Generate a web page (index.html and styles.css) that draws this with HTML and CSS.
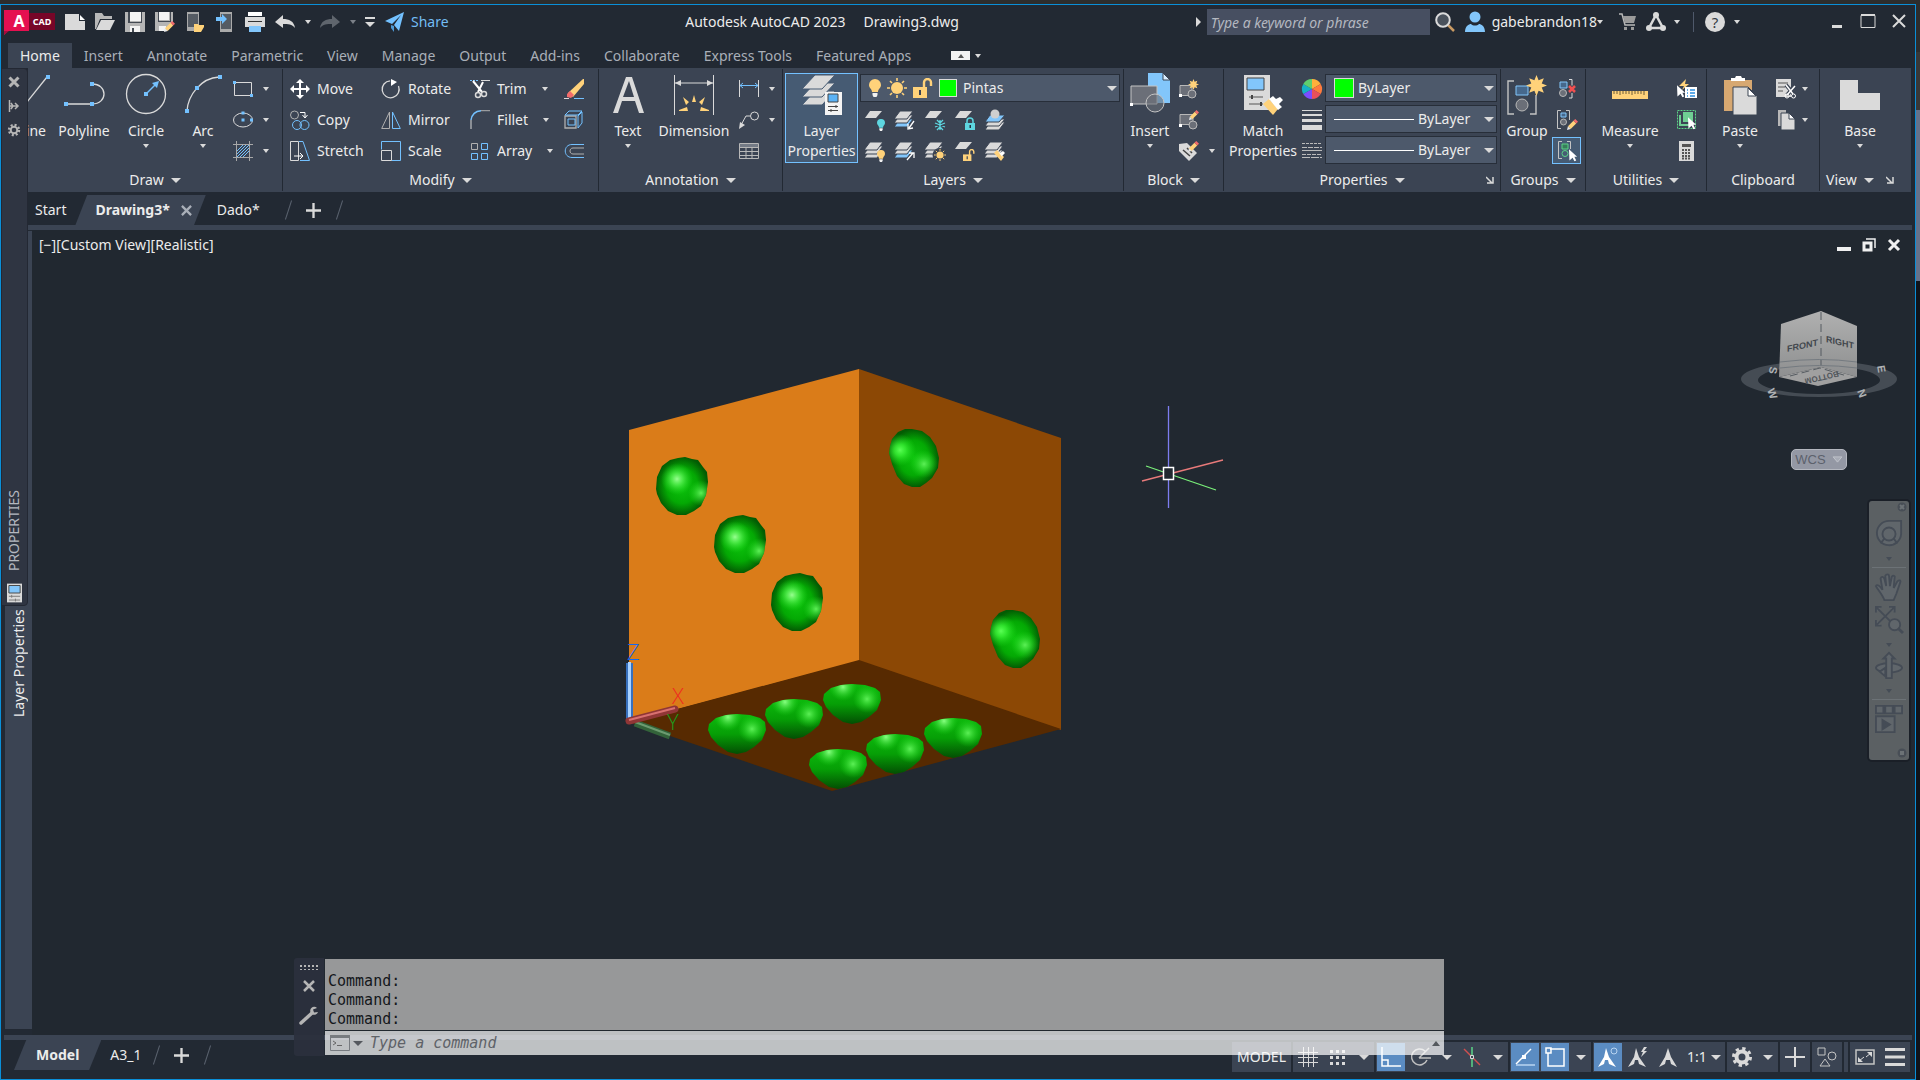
FILE: index.html
```html
<!DOCTYPE html>
<html lang="en">
<head>
    <meta charset="UTF-8">
    <meta name="viewport" content="width=device-width, initial-scale=1.0">
    <title>Autodesk AutoCAD 2023 - Drawing3.dwg</title>
    <link rel="stylesheet" href="styles.css">
</head>
<body>
    <!-- Shared icon parts -->
    <svg class="defs" width="0" height="0" aria-hidden="true">
        <defs>
            <symbol id="burst" viewBox="-10 -10 20 20">
                <polygon fill="#ffd27a" points="0,-10 2,-5 7,-7 5,-2 10,0 5,2 7,7 2,5 0,10 -2,5 -7,7 -5,2 -10,0 -5,-2 -7,-7 -2,-5"/>
            </symbol>
            <symbol id="sun" viewBox="-10 -10 20 20">
                <circle r="6" fill="#ffd27a"/>
                <path d="M0-10v3M0 7v3M-10 0h3M7 0h3M-7-7l2 2M5 5l2 2M-7 7l2-2M5-5l2-2" stroke="#ffd27a" stroke-width="1.6"/>
            </symbol>
            <symbol id="pencil" viewBox="0 0 12 12">
                <polygon fill="#ffd27a" points="1,8 7,2 10,5 4,11"/>
                <polygon fill="#f26b6b" points="7,2 9,0 12,3 10,5"/>
                <polygon fill="#e8e8e8" points="1,8 4,11 0,12"/>
            </symbol>
            <symbol id="cursor" viewBox="0 0 10 14">
                <path d="M0 0l9 8.500H6l2 4-2 1-2-4-3.500 3z" fill="#fff"/>
            </symbol>
            <symbol id="sheet" viewBox="0 0 20 20">
                <polygon fill="#dadada" points="5,1 17,1 11,8 0,8"/>
            </symbol>
            <symbol id="stack" viewBox="0 0 20 20">
                <g fill="#dadada" stroke="#3b4453" stroke-width="1">
                    <polygon points="5,9 18,9 12,17 -1,17"/>
                    <polygon points="5,5 18,5 12,13 -1,13"/>
                    <polygon points="5,1 18,1 12,9 -1,9"/>
                </g>
            </symbol>
            <symbol id="stack-blue" viewBox="0 0 20 20">
                <g fill="#dadada" stroke="#3b4453" stroke-width="1">
                    <polygon fill="#82c6fb" points="5,9 18,9 12,17 -1,17"/>
                    <polygon points="5,5 18,5 12,13 -1,13"/>
                    <polygon points="5,1 18,1 12,9 -1,9"/>
                </g>
            </symbol>
            <symbol id="bulb" viewBox="0 0 12 18">
                <path d="M6 0a6 6 0 0 1 6 6c0 3-3 4-3 7H3c0-3-3-4-3-7a6 6 0 0 1 6-6z" fill="currentColor"/>
                <path d="M3.500 14h5v2l-1 2h-3l-1-2z" fill="#f2f2f2"/>
            </symbol>
            <symbol id="open-lock" viewBox="0 0 20 20">
                <path d="M11 10V4.500a3.500 3.500 0 0 1 7 0V8" fill="none" stroke="#ffd27a" stroke-width="2.400"/>
                <path d="M0 9h14v11H0z" fill="#ffd27a"/><path d="M6 12h2v5H6z" fill="#3b4453"/>
            </symbol>
            <symbol id="launcher" viewBox="0 0 8 8">
                <path d="M0 1l6 6M7 1v6H1" fill="none" stroke="#dadada" stroke-width="1.500"/>
            </symbol>
        </defs>
    </svg>

    <div class="window">
        <!-- Title bar -->
        <header class="titlebar">
            <button class="logo" aria-label="Application menu">
                <svg width="52" height="28" viewBox="0 0 52 28">
                    <path d="M0 2h25v21H4l-4 4z" fill="#e51050"/><path d="M0 23h5l-5 4z" fill="#a60c3d"/><path d="M25 5h26v17H25z" fill="#770628"/>
                    <text x="15" y="19" class="logo-a">A</text><text x="38" y="17" class="logo-cad">CAD</text>
                </svg>
            </button>
            <div class="quick">
                <button aria-label="New"><svg viewBox="0 0 20 20"><path d="M0 2h14v7h6v9H0z" fill="#dadada"/><path d="M15 3l5 5h-5z" fill="#fff"/></svg></button>
                <button aria-label="Open"><svg viewBox="0 0 20 20"><path d="M0 1h7l2 3h8v3H5L1 17H0z" fill="#b8b8b8"/><path d="M6 8h14l-5 10H1z" fill="#dadada"/></svg></button>
                <button aria-label="Save"><svg viewBox="0 0 20 20"><path d="M0 0h20v20H0z" fill="#b5b5b5"/><path d="M5 0h11v9H5zM5 14h10v6H5z" fill="#f4f4f4"/><path d="M3 0h2v10h11V0h1v11H3zM7 16h2v4H7z" fill="#444a53"/></svg></button>
                <button aria-label="Save as"><svg viewBox="0 0 20 20"><path d="M0 0h18v12l-6 7H0z" fill="#b5b5b5"/><path d="M4 0h10v8H4zM4 14h7v5H4z" fill="#f4f4f4"/><path d="M3 0h1v9h11V0h1v10H3z" fill="#444a53"/><use href="#pencil" x="9" y="9" width="11" height="11"/></svg></button>
                <button aria-label="Open from device"><svg viewBox="0 0 20 20"><path d="M2 0h12v13l-5 6H2z" fill="#aaa"/><path d="M3 2h10v13H3z" fill="#555b63"/><path d="M9 12h4l1 1h5v2l-3 5H9z" fill="#ffd27a"/></svg></button>
                <button aria-label="Save to device"><svg viewBox="0 0 20 20"><path d="M5 0h12v20H5z" fill="#aaa"/><path d="M6 2h10v15H6z" fill="#555b63"/><path d="M1 5h6V2l5 5-5 5V9H1z" fill="#73c1ff"/></svg></button>
                <button aria-label="Plot"><svg viewBox="0 0 20 20"><path d="M3 0h14v4H3z" fill="#fff"/><path d="M0 5h20v10H0z" fill="#dadada"/><path d="M3 9h14v1H3z" fill="#333"/><path d="M4 14h12v6H4z" fill="#82c6fb"/></svg></button>
                <button aria-label="Undo"><svg viewBox="0 0 20 20"><path d="M0 10l8-7v4c6 0 11 2 12 9-3-4-7-4-12-4v4z" fill="#dadada"/></svg></button>
                <button class="narrow" aria-label="Undo list"><span class="caret"></span></button>
                <button aria-label="Redo"><svg viewBox="0 0 20 20"><path d="M20 10l-8-7v4C6 7 1 9 0 16c3-4 7-4 12-4v4z" fill="#5f656d"/></svg></button>
                <button class="narrow" aria-label="Redo list"><span class="caret dim"></span></button>
                <button class="custom" aria-label="Customize"><span class="bar"></span><span class="caret wide"></span></button>
                <button class="share"><svg viewBox="0 0 20 20"><path d="M0 9L19 0l-5 19-5-6 7-10-9 9z" fill="#73c1ff"/><path d="M6 13l3 1v6l-3-4z" fill="#4e9ad6"/></svg>Share</button>
            </div>
            <div class="caption"><span>Autodesk AutoCAD 2023</span><span>Drawing3.dwg</span></div>
            <div class="account">
                <span class="caret-right"></span>
                <input class="search" type="text" placeholder="Type a keyword or phrase" aria-label="Search">
                <button aria-label="Search"><svg viewBox="0 0 20 20"><path d="M13 13l6 6" stroke="#c99a63" stroke-width="2.500"/><circle cx="8" cy="8" r="6.800" fill="#4a525c" stroke="#dadada" stroke-width="2"/></svg></button>
                <button class="user"><svg viewBox="0 0 20 20"><circle cx="10" cy="5" r="5.500" fill="#82c6fb"/><path d="M0 20c0-6 4-8 6-8 2 2 6 2 8 0 2 0 6 2 6 8z" fill="#82c6fb"/></svg><span>gabebrandon18</span><span class="caret"></span></button>
                <button class="cart" aria-label="Store"><svg viewBox="0 0 20 20"><path d="M1 2h3l3 11h10" fill="none" stroke="#b8b8b8" stroke-width="1.500"/><path d="M5 4h13l-2 7H7zM6 15h3v3H6zM13 15h3v3h-3z" fill="#9a9a9a"/></svg></button>
                <button class="apps" aria-label="Autodesk apps"><svg viewBox="0 0 20 20"><path d="M10 3l7 13H3z" fill="none" stroke="#dadada" stroke-width="2.500"/><circle cx="10" cy="3" r="3" fill="#dadada"/><circle cx="3" cy="16" r="3" fill="#dadada"/><circle cx="17" cy="16" r="3" fill="#dadada"/></svg><span class="caret"></span></button>
                <button class="help" aria-label="Help"><span class="help-mark">?</span><span class="caret"></span></button>
            </div>
            <div class="window-buttons">
                <button aria-label="Minimize"><svg viewBox="0 0 16 16"><path d="M3 11h10v3H3z" fill="#dadada"/></svg></button>
                <button aria-label="Maximize"><svg viewBox="0 0 16 16"><path d="M1 1.500h14v12H1z" fill="none" stroke="#dadada"/><path d="M1 0h14v2H1z" fill="#dadada"/></svg></button>
                <button aria-label="Close"><svg viewBox="0 0 16 16"><path d="M2 1l12 12M14 1L2 13" stroke="#dadada" stroke-width="2"/></svg></button>
            </div>
        </header>

        <!-- Ribbon tabs -->
        <nav class="ribbon-tabs">
            <a href="#" class="active">Home</a>
            <a href="#">Insert</a>
            <a href="#">Annotate</a>
            <a href="#">Parametric</a>
            <a href="#">View</a>
            <a href="#">Manage</a>
            <a href="#">Output</a>
            <a href="#">Add-ins</a>
            <a href="#">Collaborate</a>
            <a href="#">Express Tools</a>
            <a href="#">Featured Apps</a>
            <button class="ribbon-toggle" aria-label="Minimize ribbon"><span class="toggle-box"></span><span class="caret"></span></button>
        </nav>

        <!-- Ribbon -->
        <div class="ribbon">
            <section class="panel">
                <div class="panel-body">
                    <button class="big line"><svg viewBox="0 0 40 40"><path d="M9 39L37 4" stroke="#dadada" stroke-width="1.300"/><path d="M36 2h4v4h-4z" fill="#73c1ff"/></svg><span>Line</span></button>
                    <button class="big polyline"><svg viewBox="0 0 40 40"><path d="M2 31h26c16 0 16-20 0-20" fill="none" stroke="#dadada" stroke-width="1.300"/><path d="M0 29h4v4H0zM26 29h4v4h-4zM26 9h4v4h-4z" fill="#73c1ff"/></svg><span>Polyline</span></button>
                    <button class="big polyline"><svg viewBox="0 0 40 40"><circle cx="20" cy="21" r="19.500" fill="none" stroke="#dadada" stroke-width="1.300"/><path d="M20 21l10-10" stroke="#73c1ff" stroke-width="1.500"/><path d="M18 19h4v4h-4zM33 8l-7 2 5 5z" fill="#73c1ff"/></svg><span>Circle</span><span class="caret"></span></button>
                    <button class="big arc"><svg viewBox="0 0 40 40"><path d="M4 38C5 22 18 5 36 4" fill="none" stroke="#dadada" stroke-width="1.300"/><path d="M2 36h4v4H2zM12 13h4v4h-4zM35 2h4v4h-4z" fill="#73c1ff"/></svg><span>Arc</span><span class="caret"></span></button>
                    <div class="small-col">
                        <button aria-label="Rectangle"><svg viewBox="0 0 20 20"><path d="M1.500 3.500h17v13h-17z" fill="none" stroke="#dadada"/><path d="M0 2h3v3H0zM17 15h3v3h-3z" fill="#73c1ff"/></svg><span class="caret"></span></button>
                        <button aria-label="Ellipse"><svg viewBox="0 0 20 20"><ellipse cx="10" cy="10" rx="9.500" ry="7" fill="none" stroke="#dadada"/><path d="M8.500 8.500h3v3h-3zM8.500 1.500h3v3h-3zM17 8.500h3v3h-3z" fill="#73c1ff"/></svg><span class="caret"></span></button>
                        <button aria-label="Hatch"><svg viewBox="0 0 20 20"><path d="M3.500 0v20M16.500 0v20M0 3.500h20M0 16.500h20" stroke="#a8a8a8"/><path d="M4 10l6-6M4 13l9-9M4 16l12-12M7 16l9-9M10 16l6-6" stroke="#73c1ff"/></svg><span class="caret"></span></button>
                    </div>
                </div>
                <h2>Draw <span class="caret wide"></span></h2>
            </section>

            <section class="panel">
                <div class="panel-body modify-grid">
                    <button><svg viewBox="0 0 20 20"><path d="M10 0l4 4h-3v5h5V6l4 4-4 4v-3h-5v5h3l-4 4-4-4h3v-5H4v3l-4-4 4-4v3h5V4H6z" fill="#fff"/></svg><span>Move</span></button>
                    <button><svg viewBox="0 0 20 20"><path d="M8 2a8.500 8.500 0 1 0 9 4" fill="none" stroke="#dadada" stroke-width="1.300" transform="rotate(8 10 10)"/><path d="M10 0l6 3-6 4z" fill="#fff"/></svg><span>Rotate</span></button>
                    <button><svg viewBox="0 0 20 20"><path d="M0 1.500h9" stroke="#73c1ff" stroke-dasharray="2 1"/><path d="M11 1.500h9" stroke="#dadada"/><path d="M3 2l9 11M13 3l-5 10" stroke="#fff" stroke-width="2"/><circle cx="8" cy="16" r="2.500" fill="none" stroke="#dadada" stroke-width="1.500"/><circle cx="14" cy="15" r="2.500" fill="none" stroke="#dadada" stroke-width="1.500"/></svg><span>Trim</span><span class="caret"></span></button>
                    <button aria-label="Erase"><svg viewBox="0 0 20 20"><path d="M19 0h1v5L9 18l-5-4z" fill="#ffd27a"/><path d="M6 12l4 4-3 3-4-1v-3z" fill="#f26b6b"/><path d="M0 19.500h5" stroke="#dadada"/><path d="M10 19.500h10" stroke="#73c1ff"/></svg></button>
                    <button><svg viewBox="0 0 20 20"><circle cx="4.500" cy="5" r="4" fill="none" stroke="#b0b0b0"/><circle cx="7" cy="15" r="4.500" fill="none" stroke="#73c1ff"/><circle cx="14.500" cy="15" r="4.500" fill="none" stroke="#73c1ff"/><path d="M10 2.500h5v5M12.500 5l2.500 3 2.500-3" fill="none" stroke="#fff"/></svg><span>Copy</span></button>
                    <button><svg viewBox="0 0 20 20"><path d="M8.500 2v16.500H.700z" fill="none" stroke="#b0b0b0"/><path d="M11.500 2v16.500h7.800z" fill="none" stroke="#73c1ff"/></svg><span>Mirror</span></button>
                    <button><svg viewBox="0 0 20 20"><path d="M1 19V10" stroke="#dadada"/><path d="M1 10C2 4 6 1 11 .700" fill="none" stroke="#73c1ff" stroke-width="1.500"/><path d="M11 .700h9" stroke="#b0b0b0"/></svg><span>Fillet</span><span class="caret"></span></button>
                    <button aria-label="Explode"><svg viewBox="0 0 20 20"><path d="M1 6h11v12H1z" fill="none" stroke="#b0b0b0" stroke-width="1.300"/><path d="M1 5l4-4h13l-4 4zM14 6l4-4v11l-4 5zM4 9h7v6H4z" fill="none" stroke="#73c1ff"/></svg></button>
                    <button><svg viewBox="0 0 20 20"><path d="M.500.500h8v19h-8z" fill="none" stroke="#dadada"/><path d="M9 .500h4l6.500 19H10" fill="none" stroke="#73c1ff"/><path d="M4 15h8M10 12l3 3-3 3" fill="none" stroke="#fff"/></svg><span>Stretch</span></button>
                    <button><svg viewBox="0 0 20 20"><path d="M.500 8.500V.500h19v19h-9" fill="none" stroke="#73c1ff"/><path d="M.500 9.500h10v10H.500z" fill="none" stroke="#dadada"/></svg><span>Scale</span></button>
                    <button><svg viewBox="0 0 20 20"><path d="M1.500 2.500h6v6h-6z" fill="none" stroke="#b0b0b0"/><path d="M11.500 2.500h6v6h-6zM1.500 12.500h6v6h-6zM11.500 12.500h6v6h-6z" fill="none" stroke="#73c1ff"/></svg><span>Array</span><span class="caret"></span></button>
                    <button aria-label="Offset"><svg viewBox="0 0 20 20"><path d="M20 3.500H8c-9 0-9 13 0 13h12" fill="none" stroke="#73c1ff"/><path d="M20 7H9c-4 0-4 6 0 6h11" fill="none" stroke="#b0b0b0"/></svg></button>
                </div>
                <h2>Modify <span class="caret wide"></span></h2>
            </section>

            <section class="panel">
                <div class="panel-body annotation">
                    <button class="big text-tool"><svg viewBox="0 0 40 40"><path d="M5 40L18 4h6l12 36h-5l-4-12H14l-4 12zM15 24h11L21 8z" fill="#dadada"/></svg><span>Text</span><span class="caret"></span></button>
                    <button class="big dimension"><svg viewBox="0 0 40 40"><path d="M.500 2v40M39.500 2v40M1 10h38" stroke="#dadada"/><path d="M1 10l6-3v6zM39 10l-6-3v6z" fill="#dadada"/><path d="M20 22l-2 7h4zM9 24l3 8 3-3zM31 24l-3 8-3-3zM5 37l8-3 1 4H5zM35 37l-8-3-1 4h9z" fill="#ffd27a"/></svg><span>Dimension</span></button>
                    <div class="small-col">
                        <button aria-label="Linear dimension"><svg viewBox="0 0 20 20"><path d="M.500 1v17M19.500 1v17" stroke="#dadada"/><path d="M1 6.500h18M4 4L1 6.500 4 9M16 4l3 2.500L16 9" fill="none" stroke="#73c1ff"/></svg><span class="caret"></span></button>
                        <button aria-label="Leader"><svg viewBox="0 0 20 20"><circle cx="15.500" cy="6" r="4" fill="none" stroke="#dadada"/><path d="M2 15l5-9h4" fill="none" stroke="#dadada"/><path d="M0 19l1-7 5 3z" fill="#dadada"/></svg><span class="caret"></span></button>
                        <button aria-label="Table"><svg viewBox="0 0 20 20"><path d="M.500 2.500h19v15H.500zM0 6.500h20M0 10.500h20M0 14.500h20M7 6v12M13 6v12" fill="none" stroke="#b8b8b8"/><path d="M1 3h18v3H1z" fill="#747b86"/></svg></button>
                    </div>
                </div>
                <h2>Annotation <span class="caret wide"></span></h2>
            </section>

            <section class="panel">
                <div class="panel-body layers">
                    <button class="big selected"><svg viewBox="0 0 40 40"><g fill="#dadada" stroke="#465b73"><polygon points="13,18 33,18 20,32 0,32"/><polygon points="13,10 33,10 20,24 0,24"/><polygon points="13,2 33,2 20,16 0,16"/></g><path d="M23 19h17v23H23z" fill="#f4f4f4"/><path d="M26 21h10v8H26z" fill="#5ab2f5" stroke="#444"/><path d="M26 33.500h10M26 37.500h10M34 32v3M29 36v3" stroke="#444"/></svg><span>Layer<br>Properties</span></button>
                    <div class="layer-tools">
                        <div class="combo">
                            <svg class="combo-bulb" viewBox="0 0 12 18"><use href="#bulb"/></svg>
                            <svg viewBox="0 0 20 20"><use href="#sun"/></svg>
                            <svg viewBox="0 0 20 20"><use href="#open-lock"/></svg>
                            <span class="swatch small"></span>
                            <select aria-label="Layer"><option>Pintas</option></select>
                            <span class="caret wide"></span>
                        </div>
                        <div class="layer-grid">
                            <button class="cyan" aria-label="Layer off"><svg viewBox="0 0 20 20"><use href="#sheet"/><use href="#bulb" x="12" y="9" width="8" height="12"/></svg></button>
                            <button aria-label="Isolate"><svg viewBox="0 0 20 20"><use href="#stack-blue"/><path d="M19 11l-5 7M13 14v5l5-1" fill="none" stroke="#fff" stroke-width="1.300"/></svg></button>
                            <button class="cyan" aria-label="Freeze"><svg viewBox="0 0 20 20"><use href="#sheet"/><path d="M15 10v10M10 13l10 4M10 17l10-4M12 10l3 3 3-3M12 20l3-3 3 3" fill="none" stroke="currentColor" stroke-width="1.300"/></svg></button>
                            <button class="cyan" aria-label="Lock"><svg viewBox="0 0 20 20"><use href="#sheet"/><path d="M12 13v-2a3 3 0 0 1 6 0v2" fill="none" stroke="currentColor" stroke-width="1.500"/><path d="M10 13h10v7H10z" fill="currentColor"/><path d="M14.500 15h1.500v3h-1.500z" fill="#234"/></svg></button>
                            <button aria-label="Make current"><svg viewBox="0 0 20 20"><g stroke="#3b4453"><polygon fill="#dadada" points="5,12 20,12 14,20 0,20"/><polygon fill="#dadada" points="5,9 20,9 14,16 0,16"/><polygon fill="#82c6fb" points="5,5 20,5 14,12 0,12"/></g><circle cx="10" cy="4" r="4.500" fill="#cfcfcf"/></svg></button>
                            <button class="yellow" aria-label="All layers on"><svg viewBox="0 0 20 20"><use href="#stack"/><use href="#bulb" x="12" y="9" width="8" height="12"/></svg></button>
                            <button aria-label="Unisolate"><svg viewBox="0 0 20 20"><use href="#stack-blue"/><path d="M12 19l6-7M14 12h5v5" fill="none" stroke="#fff" stroke-width="1.300"/></svg></button>
                            <button aria-label="Thaw"><svg viewBox="0 0 20 20"><use href="#stack"/><circle cx="14.500" cy="14" r="7" fill="#3b4453"/><use href="#sun" x="9" y="8" width="12" height="12"/></svg></button>
                            <button aria-label="Unlock"><svg viewBox="0 0 20 20"><use href="#sheet"/><use href="#open-lock" x="8" y="8" width="12" height="12"/></svg></button>
                            <button aria-label="Match layer"><svg viewBox="0 0 20 20"><use href="#stack"/><path d="M9 12l3-3 7 7-3 4z" fill="#ffd27a"/><path d="M12 9l3 3 3-2 2 2-3 3 1 2" fill="#fff"/></svg></button>
                        </div>
                    </div>
                </div>
                <h2>Layers <span class="caret wide"></span></h2>
            </section>

            <section class="panel">
                <div class="panel-body block">
                    <button class="big insert"><svg viewBox="0 0 40 40"><path d="M18 0h15l7 7v23H18z" fill="#82c6fb"/><path d="M33 0v7h7z" fill="#dbeeff" stroke="#3b4453"/><path d="M1 13h26v18H1z" fill="#6b6f78" stroke="#c4c4c4"/><circle cx="25" cy="30" r="9" fill="#6b6f7899" stroke="#c4c4c4"/><path d="M0 30h3v3H0z" fill="#fff"/></svg><span>Insert</span><span class="caret"></span></button>
                    <div class="small-col">
                        <button aria-label="Create block"><svg viewBox="0 0 20 20"><path d="M1 6.500h12v10H1z" fill="#6b6f78" stroke="#b8b8b8"/><circle cx="13" cy="15" r="4" fill="#6b6f78" stroke="#b8b8b8"/><use href="#burst" x="9" y="0" width="11" height="11"/><path d="M0 15h3v3H0z" fill="#fff"/></svg></button>
                        <button aria-label="Edit block"><svg viewBox="0 0 20 20"><path d="M1 4.500h13v10H1z" fill="#6b6f78" stroke="#b8b8b8"/><circle cx="14" cy="15" r="4" fill="#6b6f78" stroke="#b8b8b8"/><use href="#pencil" x="10" y="0" width="10" height="10"/><path d="M0 14h3v3H0z" fill="#fff"/></svg></button>
                        <button aria-label="Edit attributes"><svg viewBox="0 0 20 20"><path d="M0 3l8-1 10 10-8 8L0 10z" fill="#dadada"/><path d="M4 9l7 6M8 7l5 5" stroke="#444" stroke-width="1.500"/><use href="#pencil" x="9" y="0" width="11" height="11"/></svg><span class="caret"></span></button>
                    </div>
                </div>
                <h2>Block <span class="caret wide"></span></h2>
            </section>

            <section class="panel">
                <div class="panel-body properties">
                    <button class="big match"><svg viewBox="0 0 40 40"><path d="M1 2h26v35H1z" fill="#dadada"/><path d="M4 5h17v12H4z" fill="#82c6fb" stroke="#444"/><path d="M6 24h14M6 31h14" stroke="#555"/><path d="M8 22h2v4H8zM17 29h2v4h-2z" fill="#444"/><path d="M20 31l6-5 9 10-5 6z" fill="#ffd27a"/><path d="M26 26l4-3 3 3 4-2 3 3-4 4 3 3-4 3z" fill="#fff"/></svg><span>Match<br>Properties</span></button>
                    <div class="property-rows">
                        <div class="property-row">
                            <svg viewBox="-10 -10 20 20"><path d="M0 0V-10A10 10 0 0 1 8.700-5z" fill="#ffb03b"/><path d="M0 0L8.700-5A10 10 0 0 1 8.700 5z" fill="#ff7b3d"/><path d="M0 0L8.700 5A10 10 0 0 1 0 10z" fill="#e8505b"/><path d="M0 0V10A10 10 0 0 1-8.700 5z" fill="#7c4dff"/><path d="M0 0L-8.700 5A10 10 0 0 1-8.700-5z" fill="#17b1c6"/><path d="M0 0L-8.700-5A10 10 0 0 1 0-10z" fill="#5fce6e"/></svg>
                            <div class="combo"><span class="swatch"></span><select aria-label="Object color"><option>ByLayer</option></select><span class="caret wide"></span></div>
                        </div>
                        <div class="property-row">
                            <svg viewBox="0 0 20 20"><path d="M0 0h20v1H0zM0 4h20v2H0zM0 9h20v3H0zM0 15h20v5H0z" fill="#dadada"/></svg>
                            <div class="combo"><span class="line-sample"></span><select aria-label="Lineweight"><option>ByLayer</option></select><span class="caret wide"></span></div>
                        </div>
                        <div class="property-row">
                            <svg viewBox="0 0 20 20"><path d="M0 2.500h20" stroke="#bbb" stroke-dasharray="3 1"/><path d="M0 6.500h20" stroke="#bbb" stroke-dasharray="5 1"/><path d="M0 9.500h20" stroke="#bbb"/><path d="M0 13.500h20" stroke="#bbb" stroke-dasharray="4 1"/><path d="M0 16.500h20" stroke="#bbb" stroke-dasharray="8 1"/></svg>
                            <div class="combo"><span class="line-sample"></span><select aria-label="Linetype"><option>ByLayer</option></select><span class="caret wide"></span></div>
                        </div>
                    </div>
                </div>
                <h2>Properties <span class="caret wide"></span><svg class="launcher" viewBox="0 0 8 8"><use href="#launcher"/></svg></h2>
            </section>

            <section class="panel">
                <div class="panel-body groups">
                    <button class="big group"><svg viewBox="0 0 40 40"><path d="M7 8H1v33h6M23 41h6V22" fill="none" stroke="#c4c4c4" stroke-width="1.400"/><path d="M9 13h12v9H9z" fill="#46688c" stroke="#82c6fb"/><circle cx="15" cy="32" r="6" fill="#6b6f78" stroke="#b8b8b8"/><use href="#burst" x="19" y="2" width="21" height="21"/></svg><span>Group</span></button>
                    <div class="small-col">
                        <button aria-label="Ungroup"><svg viewBox="0 0 20 20"><path d="M3 3h7v6H3z" fill="#46688c" stroke="#82c6fb"/><circle cx="6" cy="14" r="3.500" fill="#6b6f78" stroke="#b8b8b8"/><path d="M12 .500h3v6M15 14v5h-3" fill="none" stroke="#dadada"/><path d="M12 7l6 6M18 7l-6 6" stroke="#f15050" stroke-width="2.500"/></svg></button>
                        <button aria-label="Edit group"><svg viewBox="0 0 20 20"><path d="M4 .500H.500v18H4M9 .500h3.500V10" fill="none" stroke="#c4c4c4"/><path d="M4 3h5v4H4z" fill="#46688c" stroke="#82c6fb"/><circle cx="6.500" cy="12" r="3" fill="#6b6f78" stroke="#b8b8b8"/><use href="#pencil" x="10" y="9" width="11" height="11"/></svg></button>
                        <button class="selected" aria-label="Group selection"><svg viewBox="0 0 20 20"><path d="M5 .500H1.500v17H5M10 .500h3.500V8" fill="none" stroke="#c4c4c4"/><path d="M5 3h6v5H5z" fill="#377d5a" stroke="#5bd487"/><circle cx="8" cy="12.500" r="3" fill="none" stroke="#5bd487"/><use href="#cursor" x="12" y="8" width="9" height="13"/></svg></button>
                    </div>
                </div>
                <h2>Groups <span class="caret wide"></span></h2>
            </section>

            <section class="panel">
                <div class="panel-body utilities">
                    <button class="big measure"><svg viewBox="0 0 40 40"><path d="M2 18h36v8H2z" fill="#ffd27a"/><path d="M4 18v3M7 18v3M10 18v4M13 18v3M16 18v3M19 18v3M22 18v4M25 18v3M28 18v3M31 18v3M34 18v4" stroke="#6d5c38"/></svg><span>Measure</span><span class="caret"></span></button>
                    <div class="small-col">
                        <button aria-label="Quick select"><svg viewBox="0 0 20 20"><path d="M9 0L2 7h5l-2 4 7-6H8z" fill="#ffd27a"/><path d="M8 8h12v11H8z" fill="#fff"/><path d="M10 11h1M13 11h5M10 14h1M13 14h5M10 17h1M13 17h5" stroke="#2b8fe0" stroke-width="1.500"/><use href="#cursor" x="0" y="6" width="9" height="13"/></svg></button>
                        <button aria-label="Select all"><svg viewBox="0 0 20 20"><path d="M.500.500h18v18H.500z" fill="none" stroke="#5bd487" stroke-dasharray="2 1"/><path d="M6 2h10v10H6z" fill="#6fce93"/><path d="M3 5v10h10" fill="none" stroke="#6fce93" stroke-width="2"/><use href="#cursor" x="11" y="7" width="9" height="13"/></svg></button>
                        <button aria-label="Calculator"><svg viewBox="0 0 20 20"><path d="M2 0h15v20H2z" fill="#dadada"/><path d="M5 3h9v3H5z" fill="#555"/><path d="M5 9h9M5 12h9M5 15h9M5 17.500h9" stroke="#555" stroke-width="2" stroke-dasharray="2 1"/></svg></button>
                    </div>
                </div>
                <h2>Utilities <span class="caret wide"></span></h2>
            </section>

            <section class="panel">
                <div class="panel-body clipboard">
                    <button class="big paste"><svg viewBox="0 0 40 40"><path d="M4 7h28v31H4z" fill="#d7a871"/><path d="M11 8V5h4l1-2h5l1 2h3v3z" fill="#fff"/><path d="M13 14h15l9 9v19H13z" fill="#dadada" stroke="#3b4453"/><path d="M28 15v8h8z" fill="#fff" stroke="#3b4453"/></svg><span>Paste</span><span class="caret"></span></button>
                    <div class="small-col">
                        <button aria-label="Cut"><svg viewBox="0 0 20 20"><path d="M0 0h15v18H0z" fill="#dadada"/><path d="M2 4h10M2 8h7M2 12h5" stroke="#555"/><path d="M10 6l8 9M19 7l-8 9" stroke="#3b4453" stroke-width="4"/><path d="M10 6l7 9M19 7l-8 9" stroke="#fff" stroke-width="1.500"/><circle cx="11" cy="17" r="2" fill="none" stroke="#fff"/><circle cx="17.500" cy="17" r="2" fill="none" stroke="#fff"/></svg><span class="caret"></span></button>
                        <button aria-label="Copy clip"><svg viewBox="0 0 20 20"><path d="M2 0h8v16H2z" fill="#b8b8b8"/><path d="M5 3h8l6 6v11H5z" fill="#dadada" stroke="#3b4453"/><path d="M13 3v6h6z" fill="#fff" stroke="#3b4453"/></svg><span class="caret"></span></button>
                    </div>
                </div>
                <h2>Clipboard</h2>
            </section>

            <section class="panel">
                <div class="panel-body view">
                    <button class="big"><svg viewBox="0 0 40 40"><path d="M0 7h18v13h22v17H0z" fill="#dadada"/></svg><span>Base</span><span class="caret"></span></button>
                </div>
                <h2 class="start">View <span class="caret wide"></span><svg class="launcher" viewBox="0 0 8 8"><use href="#launcher"/></svg></h2>
            </section>
        </div>

        <!-- Drawing tabs -->
        <nav class="file-tabs">
            <a href="#">Start</a>
            <a href="#" class="active">Drawing3*<svg viewBox="0 0 12 12"><path d="M1 1l10 10M11 1L1 11" stroke="#a9afb8" stroke-width="2.500"/></svg></a>
            <a href="#" class="last">Dado*</a>
            <span class="slash"></span>
            <button class="plus" aria-label="New drawing"><svg viewBox="0 0 16 16"><path d="M8 0v16M0 8h16" stroke="#dadada" stroke-width="2.500"/></svg></button>
            <span class="slash"></span>
        </nav>

        <div class="workspace">
            <aside class="layer-palette"><span>Layer Properties M</span></aside>
            <main class="viewport">
                <div class="viewport-bar">
                    <span>[−][Custom View][Realistic]</span>
                    <div class="viewport-buttons">
                        <button aria-label="Minimize drawing"><svg viewBox="0 0 14 14"><path d="M0 9h14v4H0z" fill="#f0f0f0"/></svg></button>
                        <button aria-label="Restore drawing"><svg viewBox="0 0 14 14"><path d="M4 1h9v9" fill="none" stroke="#f0f0f0" stroke-width="1.500"/><path d="M2 5h7v7H2z" fill="none" stroke="#f0f0f0" stroke-width="3"/></svg></button>
                        <button aria-label="Close drawing"><svg viewBox="0 0 14 14"><path d="M2 2l10 10M12 2L2 12" stroke="#f0f0f0" stroke-width="3"/></svg></button>
                    </div>
                </div>

                <!-- Model: die with pips, crosshair and UCS -->
                <svg class="model" viewBox="600 340 660 480">
                    <defs>
                        <radialGradient id="base-side"><stop offset="0" stop-color="#0cc40c"/><stop offset=".6" stop-color="#04a904"/><stop offset="1" stop-color="#035c03"/></radialGradient>
                        <linearGradient id="base-bottom" x1="0" y1="0" x2="0" y2="1"><stop offset="0" stop-color="#0dba0d"/><stop offset=".5" stop-color="#069f06"/><stop offset="1" stop-color="#034e03"/></linearGradient>
                        <radialGradient id="spot1" gradientUnits="userSpaceOnUse" cx="-5" cy="-7" r="16"><stop offset="0" stop-color="#98ff90"/><stop offset=".35" stop-color="#5cf456" stop-opacity=".8"/><stop offset="1" stop-color="#1fd61c" stop-opacity="0"/></radialGradient>
                        <radialGradient id="spot2" gradientUnits="userSpaceOnUse" cx="19" cy="7" r="13"><stop offset="0" stop-color="#5cf056"/><stop offset="1" stop-color="#1fd61c" stop-opacity="0"/></radialGradient>
                        <radialGradient id="spot3" gradientUnits="userSpaceOnUse" cx="-14" cy="-8" r="16"><stop offset="0" stop-color="#5bff55"/><stop offset=".35" stop-color="#3cf438" stop-opacity=".8"/><stop offset="1" stop-color="#1fd61c" stop-opacity="0"/></radialGradient>
                        <radialGradient id="spot4" gradientUnits="userSpaceOnUse" cx="10" cy="6" r="14"><stop offset="0" stop-color="#5cf056"/><stop offset="1" stop-color="#1fd61c" stop-opacity="0"/></radialGradient>
                        <radialGradient id="spot5" gradientUnits="userSpaceOnUse" cx="20" cy="3" r="14"><stop offset="0" stop-color="#86ff80"/><stop offset="1" stop-color="#1fd61c" stop-opacity="0"/></radialGradient>
                        <radialGradient id="spot6" gradientUnits="userSpaceOnUse" cx="44" cy="15" r="14"><stop offset="0" stop-color="#5cf056"/><stop offset="1" stop-color="#1fd61c" stop-opacity="0"/></radialGradient>
                        <path id="left-shape" d="M-26 3L-25-9-20-20-12-26-4-28 3-29 10-27 16-26 21-19 25-14 26-4 24 9 19 20 12 25 4 29-5 29-14 25-21 17-25 8z"/>
                        <path id="right-shape" d="M-24-12L-22-19-16-26-9-29-2-29 8-27 16-21 22-12 25 0 24 10 18 20 12 25 6 29-2 29-10 26-17 18-22 6-25-5z"/>
                        <path id="bottom-shape" d="M0 16L1 10 8 4 18 1 29 0 42 1 52 4 57 8 58 16 54 26 46 33 38 38 29 40 20 38 10 31 3 23z"/>
                        <g id="pip-left"><use href="#left-shape" fill="url(#base-side)"/><use href="#left-shape" fill="url(#spot1)"/><use href="#left-shape" fill="url(#spot2)"/></g>
                        <g id="pip-right"><use href="#right-shape" fill="url(#base-side)"/><use href="#right-shape" fill="url(#spot3)"/><use href="#right-shape" fill="url(#spot4)"/></g>
                        <g id="pip-bottom"><use href="#bottom-shape" fill="url(#base-bottom)"/><use href="#bottom-shape" fill="url(#spot5)"/><use href="#bottom-shape" fill="url(#spot6)"/></g>
                    </defs>
                    <polygon points="629,430 859,369 859,661 629,722" fill="#da7c19"/>
                    <polygon points="859,369 1061,438 1061,730 859,661" fill="#8c4805"/>
                    <polygon points="629,722 859,660 1061,729 832,791" fill="#572a01"/>
                    <use href="#pip-left" x="682" y="486"/><use href="#pip-left" x="740" y="544"/><use href="#pip-left" x="797" y="602"/>
                    <use href="#pip-right" x="914" y="458"/><use href="#pip-right" x="1015" y="639"/>
                    <use href="#pip-bottom" x="823" y="684"/><use href="#pip-bottom" x="765" y="699"/><use href="#pip-bottom" x="708" y="714"/>
                    <use href="#pip-bottom" x="924" y="718"/><use href="#pip-bottom" x="866" y="734"/><use href="#pip-bottom" x="809" y="749"/>
                    <path d="M635 723l35 13" stroke="#33633a" stroke-width="7"/><path d="M635 722l35 13" stroke="#6c9b70" stroke-width="2"/>
                    <path d="M629.500 663v59" stroke="#3770bd" stroke-width="7"/><path d="M629.500 662v59" stroke="#a9d2ff" stroke-width="3"/>
                    <path d="M629 721l46-12" stroke="#903636" stroke-width="7" stroke-linecap="round"/><path d="M629 720l46-12" stroke="#d97070" stroke-width="2"/>
                    <text x="627" y="660" class="axis" fill="#1767ee">Z</text>
                    <text x="672" y="704" class="axis" fill="#ee2c20">X</text>
                    <text x="667" y="730" class="axis" fill="#1e9a1e">Y</text>
                    <path d="M1168.500 406v102" stroke="#7d7df0" stroke-width="1.300"/>
                    <path d="M1142 481l81-21" stroke="#e87a7a" stroke-width="1.300"/>
                    <path d="M1146 466l70 24" stroke="#7af07a" stroke-width="1.300"/>
                    <path d="M1163.500 467.500h10v12h-10z" fill="#212830" stroke="#fff" stroke-width="1.500"/>
                </svg>

                <!-- View cube -->
                <svg class="viewcube" viewBox="1736 300 166 104">
                    <defs><linearGradient id="cube" x1="0" y1="0" x2="0" y2="1"><stop offset="0" stop-color="#b0b0b0"/><stop offset="1" stop-color="#8e8f90"/></linearGradient></defs>
                    <path fill-rule="evenodd" fill="#454c54" d="M1741 379a78 18 0 1 0 156 0a78 18 0 1 0-156 0zM1758 380a61 14 0 1 0 122 0a61 14 0 1 0-122 0z"/>
                    <polygon points="1781,324 1821,311 1821,367 1779,377" fill="url(#cube)"/>
                    <polygon points="1821,311 1857,326 1857,377 1821,367" fill="url(#cube)"/>
                    <polygon points="1779,377 1821,367 1857,377 1818,386" fill="#a0a0a0"/>
                    <path d="M1821 312v54M1790 376l30-8 27 8" stroke="#555b61" stroke-dasharray="8 4" fill="none"/>
                    <path d="M1780 362q40-5 77 0M1780 368q40-5 77 0" stroke="#747a80" fill="none"/>
                    <text class="cube-face" transform="translate(1787 352) skewY(-12)">FRONT</text>
                    <text class="cube-face" transform="translate(1826 342) skewY(14)">RIGHT</text>
                    <text class="cube-bottom" transform="translate(1838 371) rotate(167)">BOTTOM</text>
                    <text class="compass" transform="translate(1770 366) rotate(100)">S</text>
                    <text class="compass" transform="translate(1877 366) rotate(80)">E</text>
                    <text class="compass" transform="translate(1767 390) rotate(70)">W</text>
                    <text class="compass" transform="translate(1857 391) rotate(70)">N</text>
                </svg>
                <button class="wcs">WCS <svg viewBox="0 0 12 8"><path d="M1 1h10L6 7z" fill="#a7abb5" stroke="#c4c7ce"/></svg></button>

                <!-- Navigation bar -->
                <div class="navbar">
                    <button class="nav-dot" aria-label="Close navigation bar"><svg viewBox="0 0 10 10"><circle cx="5" cy="5" r="4.500" fill="#484e56"/><path d="M3 3l4 4M7 3L3 7" stroke="#6c7276"/></svg></button>
                    <button class="wheel" aria-label="Steering wheel"><svg viewBox="0 0 30 30"><path d="M15 1h13v14a13 13 0 1 1-13-14z"/><circle cx="15" cy="15" r="7"/><path d="M10 20l-4 5M20 20l4 5"/></svg><span class="nav-caret"></span></button>
                    <hr>
                    <button aria-label="Pan"><svg viewBox="0 0 30 30"><path d="M10 29C8 23 3 18 1 14c1-2 4-1 7 4L6 6c1-3 3-2 4 0l2 8-1-11c1-2 4-2 4 0l1 11 2-10c1-2 4-1 3 1l-1 11 4-7c2-2 4-1 3 1l-4 12-3 7z"/></svg></button>
                    <button aria-label="Zoom"><svg viewBox="0 0 30 30"><path d="M2 2l18 18M2 20L20 2M1 7V1h6M15 1h6v6M1 15v6h6"/><circle cx="21" cy="20" r="6"/><path d="M25 24l5 5" stroke-width="3"/></svg><span class="nav-caret"></span></button>
                    <button aria-label="Orbit"><svg viewBox="0 0 30 30"><ellipse cx="15" cy="17" rx="14" ry="5"/><path d="M12 28V7H9l6-6 6 6h-3v21z"/><path d="M11 17l-6 4 6 5z"/></svg><span class="nav-caret"></span></button>
                    <hr>
                    <button aria-label="Show motion"><svg viewBox="0 0 30 30"><path d="M1 1h8v8H1zM11 1h8v8h-8zM21 1h8v8h-8zM1 12h20v17H1z"/><path d="M8 16l8 5-8 5z" fill="#454c56"/></svg></button>
                    <button class="nav-dot last" aria-label="Navigation bar options"><svg viewBox="0 0 10 10"><circle cx="5" cy="5" r="4.500" fill="#484e56"/><path d="M3 4h4M3 6h4" stroke="#6c7276"/></svg></button>
                </div>
            </main>
        </div>

        <!-- Layout tabs and status bar -->
        <footer class="bottom">
            <nav class="layout-tabs">
                <a href="#" class="active">Model</a>
                <a href="#">A3_1</a>
                <span class="slash"></span>
                <button class="plus" aria-label="New layout"><svg viewBox="0 0 16 16"><path d="M8 0v16M0 8h16" stroke="#dadada" stroke-width="2.500"/></svg></button>
                <span class="slash"></span>
            </nav>
            <div class="status">
                <div class="status-group"><button class="model-space">MODEL</button></div>
                <div class="status-group">
                    <button aria-label="Grid"><svg viewBox="0 0 20 20"><path d="M5.500 0v20M10.500 0v20M15.500 0v20M0 5.500h20M0 10.500h20M0 15.500h20" stroke="#dadada"/></svg></button>
                    <button aria-label="Snap"><svg viewBox="0 0 20 20"><path d="M2 4.500h16M2 10.500h16M2 16.500h16" stroke="#dadada" stroke-width="3" stroke-dasharray="3 3"/></svg></button>
                    <button class="drop" aria-label="Snap settings"><span class="caret wide"></span></button>
                </div>
                <div class="status-group">
                    <button class="on" aria-label="Ortho"><svg viewBox="0 0 20 20"><path d="M1 0v19h19M1 13h6v6" fill="none" stroke="#fff" stroke-width="1.500"/></svg></button>
                    <button aria-label="Polar"><svg viewBox="0 0 20 20"><path d="M16 13A8 8 0 1 1 14 4M8 11h12M8 11L18 1" fill="none" stroke="#c0c0c0" stroke-width="1.500"/></svg></button>
                    <button class="drop" aria-label="Polar settings"><span class="caret wide"></span></button>
                    <button aria-label="Isometric"><svg viewBox="0 0 20 20"><path d="M2 2l16 16" stroke="#d04f4f" stroke-width="1.500"/><path d="M10 0v20" stroke="#5bd487" stroke-width="1.500"/><path d="M8.500 8.500h3v3h-3z" fill="#3b4453" stroke="#dadada"/></svg></button>
                    <button class="drop" aria-label="Isometric settings"><span class="caret wide"></span></button>
                </div>
                <div class="status-group">
                    <button class="on" aria-label="Tracking"><svg viewBox="0 0 20 20"><path d="M16 2L1 17" stroke="#fff" stroke-width="1.500"/><path d="M1 18h19" stroke="#b9d4f0" stroke-width="1.500"/><path d="M7 8h4v4H7z" fill="#fff"/></svg></button>
                    <button class="on" aria-label="Object snap"><svg viewBox="0 0 20 20"><path d="M5 2h14v17H3V6M1 1h5v5H1z" fill="none" stroke="#fff" stroke-width="1.500"/></svg></button>
                    <button class="drop" aria-label="Object snap settings"><span class="caret wide"></span></button>
                </div>
                <div class="status-group">
                    <button class="on" aria-label="Annotation visibility"><svg viewBox="0 0 20 20"><path d="M8 1l3 9 7 10-7-3-1-4H7l-1 4-6 3 6-10z" fill="#fff"/><circle cx="16" cy="4" r="3" fill="none" stroke="#b9d4f0"/></svg></button>
                    <button aria-label="Auto scale"><svg viewBox="0 0 20 20"><path d="M8 1l3 9 7 10-7-3-1-4H7l-1 4-6 3 6-10zM16 0l-3 5h2l-2 5 6-6h-3l3-4z" fill="#dadada"/></svg></button>
                    <button aria-label="Annotation scale"><svg viewBox="0 0 20 20"><path d="M10 1l3 9 6 10-6-3-1-4H8l-1 4-6 3 6-10z" fill="#dadada"/></svg></button>
                    <button class="scale">1:1<span class="caret wide"></span></button>
                </div>
                <div class="status-group">
                    <button aria-label="Workspace"><svg viewBox="-10 -10 20 20"><circle r="5.500" fill="none" stroke="#dadada" stroke-width="4"/><circle r="8.500" fill="none" stroke="#dadada" stroke-width="3" stroke-dasharray="3.300 3.370"/></svg></button>
                    <button class="drop" aria-label="Workspace list"><span class="caret wide"></span></button>
                </div>
                <div class="status-group"><button aria-label="Annotation monitor"><svg viewBox="0 0 20 20"><path d="M10 0v20M0 10h20" stroke="#dadada" stroke-width="2"/></svg></button></div>
                <div class="status-group"><button aria-label="Isolate objects"><svg viewBox="0 0 20 20"><path d="M1 1h7v7H1zM8 12l5 7H3z" fill="none" stroke="#c4c4c4"/><circle cx="15" cy="9" r="4" fill="none" stroke="#c4c4c4"/></svg></button></div>
                <div class="status-group thin"></div>
                <div class="status-group">
                    <button aria-label="Clean screen"><svg viewBox="0 0 20 20"><path d="M1 3h18v14H1z" fill="none" stroke="#c4c4c4" stroke-width="1.500"/><path d="M12 5h5v5zM8 15H3v-5z" fill="#dadada"/><path d="M11 10l5-4M4 14l5-4" stroke="#dadada"/></svg></button>
                    <button aria-label="Customization"><svg viewBox="0 0 20 20"><path d="M0 2.500h20M0 10h20M0 17.500h20" stroke="#dadada" stroke-width="3"/></svg></button>
                </div>
            </div>
        </footer>

        <!-- Floating properties palette -->
        <aside class="properties-palette">
            <button aria-label="Close palette"><svg viewBox="0 0 12 12"><path d="M1.500 1.500l9 9M10.500 1.500l-9 9" stroke="#b5b5b5" stroke-width="3"/></svg></button>
            <button aria-label="Auto-hide"><svg viewBox="0 0 12 12"><path d="M1.500 0v12M2 6h8M7 3l3 3-3 3M3 3l2 3-2 3" fill="none" stroke="#b5b5b5" stroke-width="1.500"/></svg></button>
            <button aria-label="Palette options"><svg viewBox="-6 -6 12 12"><circle r="3.300" fill="none" stroke="#b5b5b5" stroke-width="2"/><circle r="5" fill="none" stroke="#b5b5b5" stroke-width="2.400" stroke-dasharray="2 1.920"/></svg></button>
            <span class="palette-title">PROPERTIES</span>
            <svg class="palette-icon" viewBox="0 0 16 20"><path d="M0 0h16v20H0z" fill="#dadada"/><path d="M2 2h12v8H2z" fill="#82c6fb" stroke="#444"/><path d="M2 13.500h12M2 17.500h12M5 12v3M9 16v3" stroke="#777"/></svg>
        </aside>

        <!-- Command line -->
        <section class="command">
            <div class="command-handle">
                <span class="grip"></span>
                <button aria-label="Close command line"><svg viewBox="0 0 12 12"><path d="M1 1l10 10M11 1L1 11" stroke="#b5b5b5" stroke-width="2.500"/></svg></button>
                <button class="wrench" aria-label="Customize command line"><svg viewBox="0 0 20 20"><path d="M2 18L13 8" stroke="#b5b5b5" stroke-width="3.500" stroke-linecap="round"/><path d="M18 3a4 4 0 1 0 1 4l-4 .500-1-3z" fill="#b5b5b5"/></svg></button>
            </div>
            <div class="command-main">
                <div class="history"><p>Command:</p><p>Command:</p><p>Command:</p></div>
                <div class="prompt">
                    <svg viewBox="0 0 20 16"><path d="M.500.500h19v15H.500z" fill="none" stroke="#777b80"/><path d="M0 0h20v3H0z" fill="#777b80"/><path d="M3 6l3 2-3 2M7 10.500h5" fill="none" stroke="#666"/></svg>
                    <span class="caret wide dark"></span>
                    <input type="text" placeholder="Type a command" aria-label="Command">
                    <span class="caret-up"></span>
                </div>
            </div>
        </section>
    </div>
</body>
</html>
```
FILE: styles.css
```css
* {
    margin: 0;
    padding: 0;
    box-sizing: border-box;
}

body {
    font-family: 'Noto Sans', 'Open Sans', sans-serif;
    font-size: 14px;
    line-height: 20px;
    color: #ececec;
    min-height: 100vh;
    padding: 4px 4px 0 0;
    background: linear-gradient(#2d2d2d 0 52px, #383838 52px 110px, #66728a 110px 281px, #10141b 281px);
}

button, input, select {
    font: inherit;
    color: inherit;
    background: none;
    border: none;
}

button {
    display: flex;
    align-items: center;
    justify-content: center;
    cursor: pointer;
}

a {
    color: inherit;
    text-decoration: none;
}

svg {
    display: block;
    flex: none;
    width: 20px;
    height: 20px;
    overflow: visible;
}

.defs {
    position: absolute;
    width: 0;
    height: 0;
}

.window {
    position: relative;
    display: flex;
    flex-direction: column;
    min-height: calc(100vh - 4px);
    background: #222933;
    border: 1px solid #0a8fd8;
}

.caret {
    flex: none;
    border: 3px solid transparent;
    border-top: 4px solid #dadada;
    border-bottom: none;
}

.caret.wide {
    border-width: 5px 5px 0;
}

.caret.dim {
    border-top-color: #7b8088;
}

.caret.dark {
    border-top-color: #55595e;
}

/* Title bar */
.titlebar {
    display: flex;
    align-items: center;
    height: 34px;
    padding-left: 3px;
}

.logo svg {
    width: 52px;
    height: 28px;
}

.logo-a {
    font: bold 16px 'Noto Sans', sans-serif;
    text-anchor: middle;
    fill: #fff;
}

.logo-cad {
    font: bold 9px 'Noto Sans', sans-serif;
    text-anchor: middle;
    fill: #fff;
}

.quick {
    display: flex;
    align-items: center;
    margin-left: 4px;
}

.quick button {
    width: 30px;
    height: 30px;
}

.quick .narrow {
    width: 15px;
}

.quick .custom {
    flex-direction: column;
    gap: 3px;
    width: 20px;
}

.bar {
    width: 10px;
    height: 2px;
    background: #dadada;
}

.quick .share {
    width: auto;
    gap: 6px;
    padding-left: 5px;
    color: #73bdf5;
}

.caption {
    display: flex;
    flex: 1;
    justify-content: center;
    gap: 18px;
}

.account {
    display: flex;
    align-items: center;
}

.caret-right {
    border: 5px solid transparent;
    border-left-color: #dadada;
    border-right: none;
}

.search {
    width: 223px;
    height: 26px;
    margin: 0 5px 0 6px;
    padding: 0 4px;
    background: #474f61;
}

.search::placeholder {
    color: #b4b8c0;
    font-style: italic;
    opacity: 1;
}

.user {
    gap: 7px;
    margin-left: 10px;
}

.user .caret {
    margin-left: -7px;
}

.cart {
    margin-left: 15px;
}

.apps {
    gap: 8px;
    margin-left: 8px;
    padding-right: 13px;
    border-right: 1px solid #4f596b;
}

.help {
    gap: 9px;
    margin-left: 11px;
}

.help-mark {
    width: 20px;
    height: 20px;
    border-radius: 50%;
    background: #dadada;
    color: #333a44;
    font-size: 15px;
}

.window-buttons {
    display: flex;
    gap: 15px;
    margin: 0 8px 0 89px;
}

.window-buttons svg {
    width: 16px;
    height: 16px;
}

/* Ribbon tabs */
.ribbon-tabs {
    display: flex;
    height: 29px;
    padding: 4px 0 0 7px;
}

.ribbon-tabs a {
    padding: 3px 12px 2px;
    color: #a9afb8;
}

.ribbon-tabs .active {
    color: #ececec;
    background: #3b4453;
}

.ribbon-toggle {
    gap: 5px;
    margin-left: 28px;
}

.toggle-box {
    display: flex;
    align-items: center;
    justify-content: center;
    width: 19px;
    height: 9px;
    background: #f2f2f2;
}

.toggle-box::before {
    content: '';
    border: 3px solid transparent;
    border-bottom: 4px solid #555;
    border-top: none;
}

/* Ribbon */
.ribbon {
    display: grid;
    grid-template-columns: 255fr 316fr 184fr 341fr 100fr 277fr 85fr 121fr 113fr 91fr;
    height: 124px;
    margin: 0 4px 0 27px;
    background: #3b4453;
}

.panel {
    display: flex;
    flex-direction: column;
    min-width: 0;
    margin: 1px 0;
    border-right: 1px solid #222933;
    overflow: hidden;
}

.panel:last-child {
    border-right: none;
}

.panel h2 {
    display: flex;
    align-items: center;
    justify-content: center;
    gap: 7px;
    position: relative;
    height: 24px;
    padding-top: 2px;
    font-size: 14px;
    font-weight: normal;
}

.panel h2.start {
    justify-content: flex-start;
    padding-left: 6px;
}

.launcher {
    position: absolute;
    right: 6px;
    width: 8px;
    height: 8px;
}

.start .launcher {
    right: 17px;
}

.panel-body {
    display: flex;
    flex: 1;
    padding-top: 4px;
}

.big {
    flex: none;
    flex-direction: column;
    justify-content: flex-start;
    height: 90px;
}

.big svg {
    width: 40px;
    height: 40px;
    margin-bottom: 8px;
}

.big .caret {
    margin-top: 3px;
}

.line {
    width: 25px;
    align-items: flex-end;
    padding-right: 3px;
}

.line span {
    margin-right: 4px;
}

.polyline {
    width: 62px;
}

.arc {
    width: 52px;
}

.small-col {
    display: grid;
    grid-template-rows: repeat(3, 31px);
    justify-items: start;
    margin-left: 4px;
}

.small-col button {
    gap: 10px;
}

.modify-grid {
    display: grid;
    grid-template-columns: 91px 89px 94px 20px;
    grid-template-rows: repeat(3, 31px);
    padding-left: 7px;
}

.modify-grid button {
    justify-content: flex-start;
    gap: 7px;
}

.modify-grid .caret {
    margin-left: 8px;
}

.text-tool {
    width: 58px;
}

.dimension {
    width: 74px;
}

.annotation .small-col {
    margin-left: 8px;
}

.layers {
    gap: 2px;
    padding-left: 2px;
}

.selected {
    background: #465b73;
    outline: 1px solid #73c1ff;
    outline-offset: -1px;
}

.layers .selected {
    width: 73px;
}

.layer-tools {
    flex: 1;
    padding-right: 3px;
}

.combo {
    display: flex;
    align-items: center;
    flex: 1;
    gap: 6px;
    height: 28px;
    margin: 1px 0 2px;
    padding: 0 2px 0 8px;
    background: #4d596b;
    border: 1px solid #272e39;
    min-width: 0;
}

.combo-bulb {
    width: 12px;
    height: 18px;
    color: #ffd27a;
}

.combo select {
    appearance: none;
    flex: 1;
    min-width: 0;
    height: 24px;
}

.swatch {
    width: 20px;
    height: 20px;
    background: #00ff00;
    border: 1px solid #dadada;
}

.swatch.small {
    width: 18px;
    height: 18px;
}

.line-sample {
    width: 80px;
    height: 1px;
    background: #fff;
}

.layer-grid {
    display: grid;
    grid-template-columns: repeat(5, 30px);
    grid-auto-rows: 31px;
}

.cyan {
    color: #5ed6e0;
}

.yellow {
    color: #ffd27a;
}

.insert {
    width: 52px;
}

.block .small-col {
    margin-left: 3px;
}

.match {
    width: 78px;
}

.property-rows {
    flex: 1;
    padding-right: 3px;
}

.property-row {
    display: flex;
    align-items: center;
    gap: 3px;
    height: 31px;
}

.property-row select {
    margin-left: -2px;
}

.groups .big {
    width: 50px;
    margin-left: 1px;
}

.groups .small-col {
    margin-left: 0;
    justify-items: center;
}

.groups .small-col button {
    width: 29px;
    margin: 2px 0;
}

.measure {
    width: 88px;
}

.utilities .small-col {
    margin-left: 3px;
}

.paste {
    width: 66px;
}

.clipboard .small-col {
    margin-left: 3px;
}

.clipboard .small-col button {
    gap: 6px;
}

.view .big {
    width: 80px;
}

/* Drawing tabs */
.file-tabs {
    display: flex;
    align-items: flex-end;
    height: 38px;
    margin: 0 3px 0 27px;
    border-bottom: 5px solid #3b4453;
}

.file-tabs a {
    height: 30px;
    padding: 5px 9px 5px 7px;
}

.file-tabs .active {
    display: flex;
    align-items: center;
    gap: 11px;
    padding: 0 14px 0 20px;
    font-weight: bold;
    background: #3b4453;
    clip-path: polygon(9% 0, 100% 0, 91% 100%, 0 100%);
}

.file-tabs .active svg {
    width: 11px;
    height: 11px;
}

.file-tabs .last {
    padding: 5px 28px 5px 11px;
}

.slash {
    width: 1px;
    height: 20px;
    background: #59616e;
    transform: rotate(18deg);
    margin-bottom: 5px;
}

.plus {
    width: 50px;
    height: 30px;
}

.plus svg {
    width: 15px;
    height: 15px;
}

/* Workspace */
.workspace {
    display: flex;
    flex: 1;
    margin: 0 3px;
    border-bottom: 5px solid #3b4453;
}

.layer-palette {
    width: 27px;
    margin: 1px 0 6px 1px;
    padding-bottom: 312px;
    display: flex;
    align-items: flex-end;
    justify-content: center;
    background: #3b4453;
}

.layer-palette span {
    writing-mode: vertical-rl;
    transform: rotate(180deg);
    white-space: nowrap;
}

.viewport {
    position: relative;
    flex: 1;
    background: #212830;
}

.viewport-bar {
    display: flex;
    justify-content: space-between;
    padding: 5px 11px 0 7px;
}

.viewport-buttons {
    display: flex;
    gap: 11px;
}

.viewport-buttons svg {
    width: 14px;
    height: 14px;
}

.model {
    position: absolute;
    left: 568px;
    top: 110px;
    width: 660px;
    height: 480px;
}

.axis {
    font: 300 22px 'Open Sans', sans-serif;
}

.viewcube {
    position: absolute;
    right: 10px;
    top: 70px;
    width: 166px;
    height: 104px;
}

.cube-face {
    font: bold 9px 'Liberation Sans', sans-serif;
    fill: #42474d;
}

.cube-bottom {
    font: bold 8px 'Liberation Sans', sans-serif;
    fill: #50555a;
}

.compass {
    font: bold 11px 'Liberation Sans', sans-serif;
    fill: #aeb1b4;
}

.wcs {
    position: absolute;
    right: 65px;
    top: 219px;
    width: 56px;
    height: 21px;
    gap: 6px;
    border: 1px solid #b4b7bf;
    border-radius: 5px;
    background: #9498a4;
    color: #5c616c;
    font-family: 'Liberation Sans', sans-serif;
    font-size: 13px;
}

.wcs svg {
    width: 11px;
    height: 7px;
}

.navbar {
    position: absolute;
    right: 3px;
    top: 271px;
    display: flex;
    flex-direction: column;
    align-items: center;
    width: 40px;
    height: 259px;
    border-radius: 3px;
    background: #5b6063;
    box-shadow: 0 0 0 2px #1a1f27;
}

.navbar button {
    flex-direction: column;
    gap: 9px;
    margin-top: 5px;
}

.navbar .wheel {
    margin-top: 8px;
}

.navbar svg {
    width: 28px;
    height: 28px;
    fill: #60666b;
    stroke: #454c56;
    stroke-width: 2;
}

.navbar hr {
    width: 34px;
    margin-top: 6px;
    border: none;
    border-top: 1px solid #6c7276;
}

.navbar .nav-dot {
    align-self: flex-end;
    margin: 1px 2px 0 0;
}

.navbar .nav-dot.last {
    margin: auto 2px 2px 0;
}

.navbar .nav-dot svg {
    width: 10px;
    height: 10px;
    stroke: none;
}

.nav-caret {
    border: 3px solid transparent;
    border-top: 4px solid #454c56;
    border-bottom: none;
}

/* Bottom bar */
.bottom {
    display: flex;
    justify-content: space-between;
    height: 39px;
    padding: 0 5px 0 13px;
}

.layout-tabs {
    display: flex;
    height: 30px;
    align-items: center;
}

.layout-tabs a {
    padding: 5px 14px 5px 9px;
}

.layout-tabs .active {
    padding: 5px 22px;
    font-weight: bold;
    background: #3b4453;
    clip-path: polygon(14% 0, 100% 0, 86% 100%, 0 100%);
}

.layout-tabs .slash {
    margin: 0;
}

.status {
    display: flex;
    gap: 2px;
    padding-top: 2px;
}

.status-group {
    display: flex;
    gap: 2px;
    height: 30px;
    padding: 1px;
    background: #3b4453;
}

.status-group button {
    width: 28px;
}

.status-group .drop {
    width: 19px;
}

.status-group .model-space {
    width: 57px;
}

.status-group .scale {
    width: 40px;
    gap: 4px;
}

.status-group .on {
    background: #5b8cc2;
}

.status-group.thin {
    width: 4px;
}

/* Floating properties palette */
.properties-palette {
    position: absolute;
    left: 0;
    top: 63px;
    width: 27px;
    height: 538px;
    display: flex;
    flex-direction: column;
    align-items: center;
    gap: 12px;
    padding: 7px 1px 2px 0;
    background: #2f3542;
    border: 1px solid #232833;
    border-radius: 0 4px 4px 0;
}

.properties-palette button svg {
    width: 12px;
    height: 12px;
}

.palette-title {
    margin-top: auto;
    writing-mode: vertical-rl;
    transform: rotate(180deg);
    color: #b4b8c0;
}

.palette-icon {
    width: 15px;
    height: 20px;
}

/* Command line */
.command {
    position: absolute;
    left: 293px;
    right: 471px;
    bottom: 23px;
    display: flex;
}

.command-handle {
    display: flex;
    flex-direction: column;
    align-items: center;
    gap: 10px;
    width: 30px;
    padding-top: 6px;
    background: #2b303dee;
    border-radius: 3px 0 0 3px;
}

.command-handle button svg {
    width: 12px;
    height: 12px;
}

.command-handle .wrench svg {
    width: 20px;
    height: 20px;
}

.command-handle .wrench {
    margin-top: 3px;
}

.grip {
    width: 21px;
    height: 6px;
    background: radial-gradient(circle, #b5b5b5 1px, transparent 1px) 0 0 / 4px 4px;
}

.command-main {
    flex: 1;
    margin: 1px 0 1px 1px;
    font-family: 'DejaVu Sans Mono', 'Liberation Mono', monospace;
    font-size: 15px;
}

.history {
    height: 71px;
    padding: 13px 3px 0;
    background: #979899;
    color: #14171b;
    line-height: 19px;
}

.prompt {
    display: flex;
    align-items: center;
    gap: 3px;
    height: 24px;
    margin-top: 1px;
    padding: 0 4px 0 5px;
    background: #ffffffb5;
}

.prompt svg {
    width: 20px;
    height: 16px;
}

.prompt input {
    flex: 1;
    margin-left: 4px;
}

.prompt input::placeholder {
    color: #5f6368;
    font-style: italic;
    opacity: 1;
}

.caret-up {
    border: 4px solid transparent;
    border-bottom: 5px solid #55595e;
    border-top: none;
}
```
